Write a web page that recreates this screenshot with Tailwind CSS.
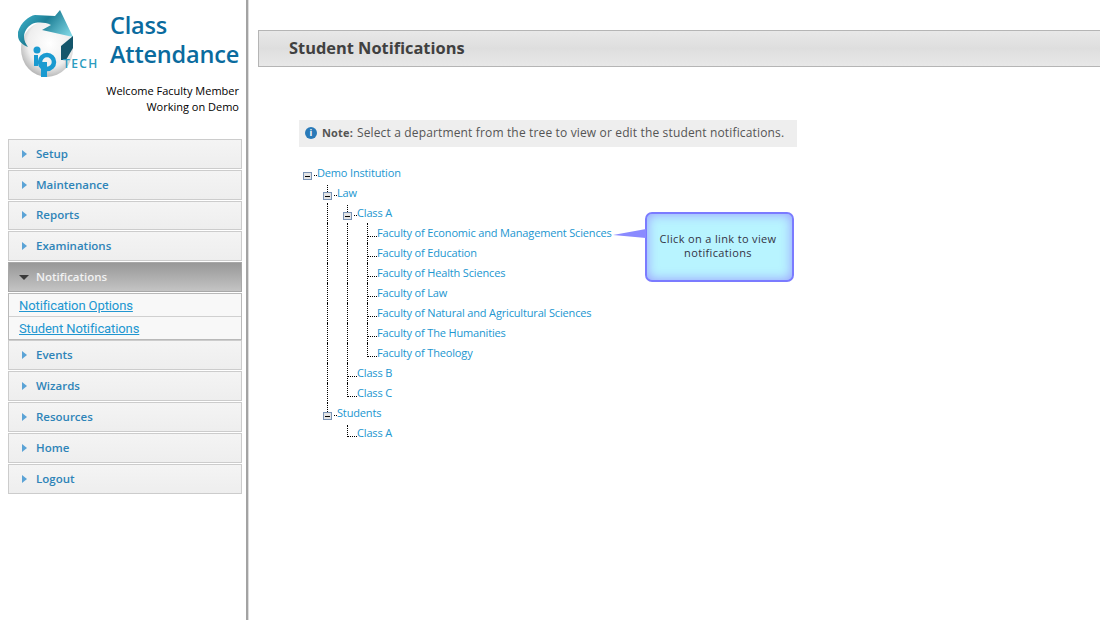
<!DOCTYPE html>
<html lang="en">
<head>
  <meta charset="UTF-8" />
  <title>Class Attendance - Student Notifications</title>
  <script src="https://cdn.jsdelivr.net/npm/@tailwindcss/browser@4"></script>
</head>
<body class="bg-white font-['Open_Sans',sans-serif] h-[620px] overflow-hidden flex">
  <!-- sidebar -->
  <aside class="w-[248px] h-[620px] shrink-0 border-r-2 border-[#a3a3a3] shadow-[1px_0_0_#dddddd]">
    <div class="flex h-[139px] pl-[15px] pt-2">
      <svg class="w-[85px] h-[75px] shrink-0" viewBox="0 0 85 75">
        <defs>
          <radialGradient id="ball" cx="0.55" cy="0.4" r="0.7"><stop offset="0" stop-color="#ffffff"/><stop offset="0.6" stop-color="#eeeeee"/><stop offset="1" stop-color="#9c9c9c"/></radialGradient>
          <linearGradient id="arrow" x1="0" y1="0" x2="1" y2="0.6"><stop offset="0" stop-color="#46bdd6"/><stop offset="0.5" stop-color="#1d7f96"/><stop offset="1" stop-color="#7fd6e4"/></linearGradient>
        </defs>
        <ellipse cx="32" cy="41" rx="26" ry="28" fill="url(#ball)"/>
        <path d="M3 24 C6 14 14 8 20 7 L40 8 L45 2 L58 29 L27 22 L36 17 C30 14 22 14 17 16 C12 19 9 24 9 29 C9 33 11 36 13 39 C8 37 3 33 3 28Z" fill="url(#arrow)"/>
        <path d="M46 38 L58 28 L58 40 L51 52 L46 52Z" fill="#14566b"/>
        <circle cx="22" cy="42" r="3.5" fill="#1a9ad0"/>
        <rect x="19" y="47" width="4" height="11" fill="#1a9ad0"/>
        <circle cx="32" cy="54" r="7" fill="none" stroke="#1a9ad0" stroke-width="4.5"/>
        <rect x="26" y="54" width="6" height="15" fill="#1a9ad0"/>
        <text x="48" y="60" font-family="Open Sans" font-size="12" font-weight="600" letter-spacing="1.4" fill="#2a9cc0">TECH</text>
      </svg>
      <div class="ml-[10px] w-[129px]">
        <div class="text-[23.5px] leading-[29px] font-semibold tracking-[-0.2px] text-[#0a6b9e] pt-[3px]">Class<br />Attendance</div>
        <div class="mt-[14px] -ml-[6px] text-right text-[11px] leading-4 font-medium whitespace-nowrap text-black">Welcome Faculty Member<br />Working on Demo</div>
      </div>
    </div>
    <nav class="pl-2 w-[242px] flex flex-col text-[11.5px] font-semibold text-[#2e84b8]">
      <a class="flex items-center h-[30px] mb-px border border-[#cccccc] bg-gradient-to-b from-[#f4f4f4] to-[#eeeeee]"><span class="ml-[13px] mr-[9px] border-y-4 border-l-[5px] border-y-transparent border-l-[#5ba3d6]"></span>Setup</a>
      <a class="flex items-center h-[30px] mb-px border border-[#cccccc] bg-gradient-to-b from-[#f4f4f4] to-[#eeeeee]"><span class="ml-[13px] mr-[9px] border-y-4 border-l-[5px] border-y-transparent border-l-[#5ba3d6]"></span>Maintenance</a>
      <a class="flex items-center h-[29px] pb-px mb-px border border-[#cccccc] bg-gradient-to-b from-[#f4f4f4] to-[#eeeeee]"><span class="ml-[13px] mr-[9px] border-y-4 border-l-[5px] border-y-transparent border-l-[#5ba3d6]"></span>Reports</a>
      <a class="flex items-center h-[30px] mb-px border border-[#cccccc] bg-gradient-to-b from-[#f4f4f4] to-[#eeeeee]"><span class="ml-[13px] mr-[9px] border-y-4 border-l-[5px] border-y-transparent border-l-[#5ba3d6]"></span>Examinations</a>
      <a class="flex items-center h-[30px] mb-px border border-[#a8a8a8] bg-gradient-to-b from-[#989898] to-[#c4c4c4] text-[#f2f2f2]"><span class="ml-[10px] mr-[7px] border-x-[5px] border-t-[5px] border-x-transparent border-t-[#3a3a3a]"></span>Notifications</a>
      <div class="h-[47px] border border-[#b9b9b9] bg-[#f8f8f8] font-['Roboto',sans-serif] text-[13px] tracking-[-0.1px] font-normal text-[#2196d0]">
        <div class="h-[23px] pl-[10px] leading-[23px] border-b border-[#d0d0d0]"><a class="underline">Notification Options</a></div>
        <div class="h-[22px] pl-[10px] leading-[23px]"><a class="underline">Student Notifications</a></div>
      </div>
      <a class="flex items-center h-[30px] mb-px border border-[#cccccc] bg-gradient-to-b from-[#f4f4f4] to-[#eeeeee]"><span class="ml-[13px] mr-[9px] border-y-4 border-l-[5px] border-y-transparent border-l-[#5ba3d6]"></span>Events</a>
      <a class="flex items-center h-[30px] mb-px border border-[#cccccc] bg-gradient-to-b from-[#f4f4f4] to-[#eeeeee]"><span class="ml-[13px] mr-[9px] border-y-4 border-l-[5px] border-y-transparent border-l-[#5ba3d6]"></span>Wizards</a>
      <a class="flex items-center h-[30px] mb-px border border-[#cccccc] bg-gradient-to-b from-[#f4f4f4] to-[#eeeeee]"><span class="ml-[13px] mr-[9px] border-y-4 border-l-[5px] border-y-transparent border-l-[#5ba3d6]"></span>Resources</a>
      <a class="flex items-center h-[30px] mb-px border border-[#cccccc] bg-gradient-to-b from-[#f4f4f4] to-[#eeeeee]"><span class="ml-[13px] mr-[9px] border-y-4 border-l-[5px] border-y-transparent border-l-[#5ba3d6]"></span>Home</a>
      <a class="flex items-center h-[30px] border border-[#cccccc] bg-gradient-to-b from-[#f4f4f4] to-[#eeeeee]"><span class="ml-[13px] mr-[9px] border-y-4 border-l-[5px] border-y-transparent border-l-[#5ba3d6]"></span>Logout</a>
    </nav>
  </aside>

  <!-- main -->
  <main class="relative flex-1 pt-[30px] pl-[10px]">
    <div class="h-[37px] pl-[30px] pb-px flex items-center border border-r-0 border-[#b5b5b5] bg-gradient-to-b from-[#e8e8e8] via-[#dedede] to-[#e8e8e8] text-[16.4px] font-bold text-[#404040]">Student Notifications</div>

    <div class="mt-[53px] ml-[41px] w-[498px] h-[27px] pl-[6px] pb-px flex items-center bg-[#eeeeee] text-[12px] tracking-[0.15px] text-[#555555]">
      <span class="w-3 h-3 rounded-full bg-[#2a7ab8] text-white text-[9px] font-bold leading-3 text-center mr-[5px]">i</span>
      <b class="mr-1 text-[11px]">Note:</b> Select a department from the tree to view or edit the student notifications.
    </div>

    <!-- tree -->
    <div class="mt-4 ml-[45px] text-[11px] leading-5 tracking-[-0.16px] text-[#2196d0]">
      <div class="flex h-5">
        <div class="w-[14px] pt-[9px] flex items-start"><span class="w-[9px] h-[8px] flex items-center justify-center border border-[#7a93b5] bg-[#e4e4e4]"><span class="w-[5px] h-px bg-black"></span></span><span class="w-[3px] mt-[3px] ml-[2px] border-t border-dotted border-black"></span></div>
        <a>Demo Institution</a>
      </div>
      <div class="flex h-5">
        <div class="w-5"></div>
        <div class="w-[14px]"><div class="ml-1 mt-[2px] h-[7px] border-l border-dotted border-black"></div><div class="flex items-start"><span class="w-[9px] h-[8px] flex items-center justify-center border border-[#7a93b5] bg-[#e4e4e4]"><span class="w-[5px] h-px bg-black"></span></span><span class="w-[3px] mt-[3px] ml-[2px] border-t border-dotted border-black"></span></div></div>
        <a>Law</a>
      </div>
      <div class="flex h-5">
        <div class="w-5"></div>
        <div class="w-5"><div class="ml-1 h-5 border-l border-dotted border-black"></div></div>
        <div class="w-[14px]"><div class="ml-1 mt-[2px] h-[7px] border-l border-dotted border-black"></div><div class="flex items-start"><span class="w-[9px] h-[8px] flex items-center justify-center border border-[#7a93b5] bg-[#e4e4e4]"><span class="w-[5px] h-px bg-black"></span></span><span class="w-[3px] mt-[3px] ml-[2px] border-t border-dotted border-black"></span></div></div>
        <a>Class A</a>
      </div>
      <div class="flex h-5"><div class="w-5"></div><div class="w-5"><div class="ml-1 h-5 border-l border-dotted border-black"></div></div><div class="w-5"><div class="ml-1 h-5 border-l border-dotted border-black"></div></div><div class="w-[14px]"><div class="ml-1 h-5 pt-[13px] border-l border-dotted border-black"><div class="w-[9px] border-t border-dotted border-black"></div></div></div><a>Faculty of Economic and Management Sciences</a></div>
      <div class="flex h-5"><div class="w-5"></div><div class="w-5"><div class="ml-1 h-5 border-l border-dotted border-black"></div></div><div class="w-5"><div class="ml-1 h-5 border-l border-dotted border-black"></div></div><div class="w-[14px]"><div class="ml-1 h-5 pt-[13px] border-l border-dotted border-black"><div class="w-[9px] border-t border-dotted border-black"></div></div></div><a>Faculty of Education</a></div>
      <div class="flex h-5"><div class="w-5"></div><div class="w-5"><div class="ml-1 h-5 border-l border-dotted border-black"></div></div><div class="w-5"><div class="ml-1 h-5 border-l border-dotted border-black"></div></div><div class="w-[14px]"><div class="ml-1 h-5 pt-[13px] border-l border-dotted border-black"><div class="w-[9px] border-t border-dotted border-black"></div></div></div><a>Faculty of Health Sciences</a></div>
      <div class="flex h-5"><div class="w-5"></div><div class="w-5"><div class="ml-1 h-5 border-l border-dotted border-black"></div></div><div class="w-5"><div class="ml-1 h-5 border-l border-dotted border-black"></div></div><div class="w-[14px]"><div class="ml-1 h-5 pt-[13px] border-l border-dotted border-black"><div class="w-[9px] border-t border-dotted border-black"></div></div></div><a>Faculty of Law</a></div>
      <div class="flex h-5"><div class="w-5"></div><div class="w-5"><div class="ml-1 h-5 border-l border-dotted border-black"></div></div><div class="w-5"><div class="ml-1 h-5 border-l border-dotted border-black"></div></div><div class="w-[14px]"><div class="ml-1 h-5 pt-[13px] border-l border-dotted border-black"><div class="w-[9px] border-t border-dotted border-black"></div></div></div><a>Faculty of Natural and Agricultural Sciences</a></div>
      <div class="flex h-5"><div class="w-5"></div><div class="w-5"><div class="ml-1 h-5 border-l border-dotted border-black"></div></div><div class="w-5"><div class="ml-1 h-5 border-l border-dotted border-black"></div></div><div class="w-[14px]"><div class="ml-1 h-5 pt-[13px] border-l border-dotted border-black"><div class="w-[9px] border-t border-dotted border-black"></div></div></div><a>Faculty of The Humanities</a></div>
      <div class="flex h-5"><div class="w-5"></div><div class="w-5"><div class="ml-1 h-5 border-l border-dotted border-black"></div></div><div class="w-5"><div class="ml-1 h-5 border-l border-dotted border-black"></div></div><div class="w-[14px]"><div class="ml-1 w-[10px] h-[14px] border-l border-b border-dotted border-black"></div></div><a>Faculty of Theology</a></div>
      <div class="flex h-5"><div class="w-5"></div><div class="w-5"><div class="ml-1 h-5 border-l border-dotted border-black"></div></div><div class="w-[14px]"><div class="ml-1 h-5 pt-[13px] border-l border-dotted border-black"><div class="w-[9px] border-t border-dotted border-black"></div></div></div><a>Class B</a></div>
      <div class="flex h-5"><div class="w-5"></div><div class="w-5"><div class="ml-1 h-5 border-l border-dotted border-black"></div></div><div class="w-[14px]"><div class="ml-1 w-[10px] h-[14px] border-l border-b border-dotted border-black"></div></div><a>Class C</a></div>
      <div class="flex h-5">
        <div class="w-5"></div>
        <div class="w-[14px]"><div class="ml-1 h-[9px] border-l border-dotted border-black"></div><div class="flex items-start"><span class="w-[9px] h-[8px] flex items-center justify-center border border-[#7a93b5] bg-[#e4e4e4]"><span class="w-[5px] h-px bg-black"></span></span><span class="w-[3px] mt-[3px] ml-[2px] border-t border-dotted border-black"></span></div></div>
        <a>Students</a>
      </div>
      <div class="flex h-5"><div class="w-5"></div><div class="w-5"></div><div class="w-[14px]"><div class="ml-1 mt-[2px] w-[10px] h-3 border-l border-b border-dotted border-black"></div></div><a>Class A</a></div>
    </div>

    <!-- callout over the tree -->
    <div class="absolute left-[397px] top-[212px] w-[149px] h-[70px] pb-[2px] pr-[3px] flex items-center justify-center rounded-[7px] border-2 border-[#7b7bff] bg-[#b8f4ff] shadow-[inset_0_0_12px_#9a9aff] text-[11px] leading-[14px] tracking-[0.35px] text-center text-[#333344]">
      <svg class="absolute left-[-34px] top-[14px] w-[34px] h-[12px]" viewBox="0 0 34 12"><path d="M0 7 L33 1 V10 Z" fill="#8a8aff"/></svg>
      <span class="w-[125px]">Click on a link to view notifications</span>
    </div>
  </main>
</body>
</html>
